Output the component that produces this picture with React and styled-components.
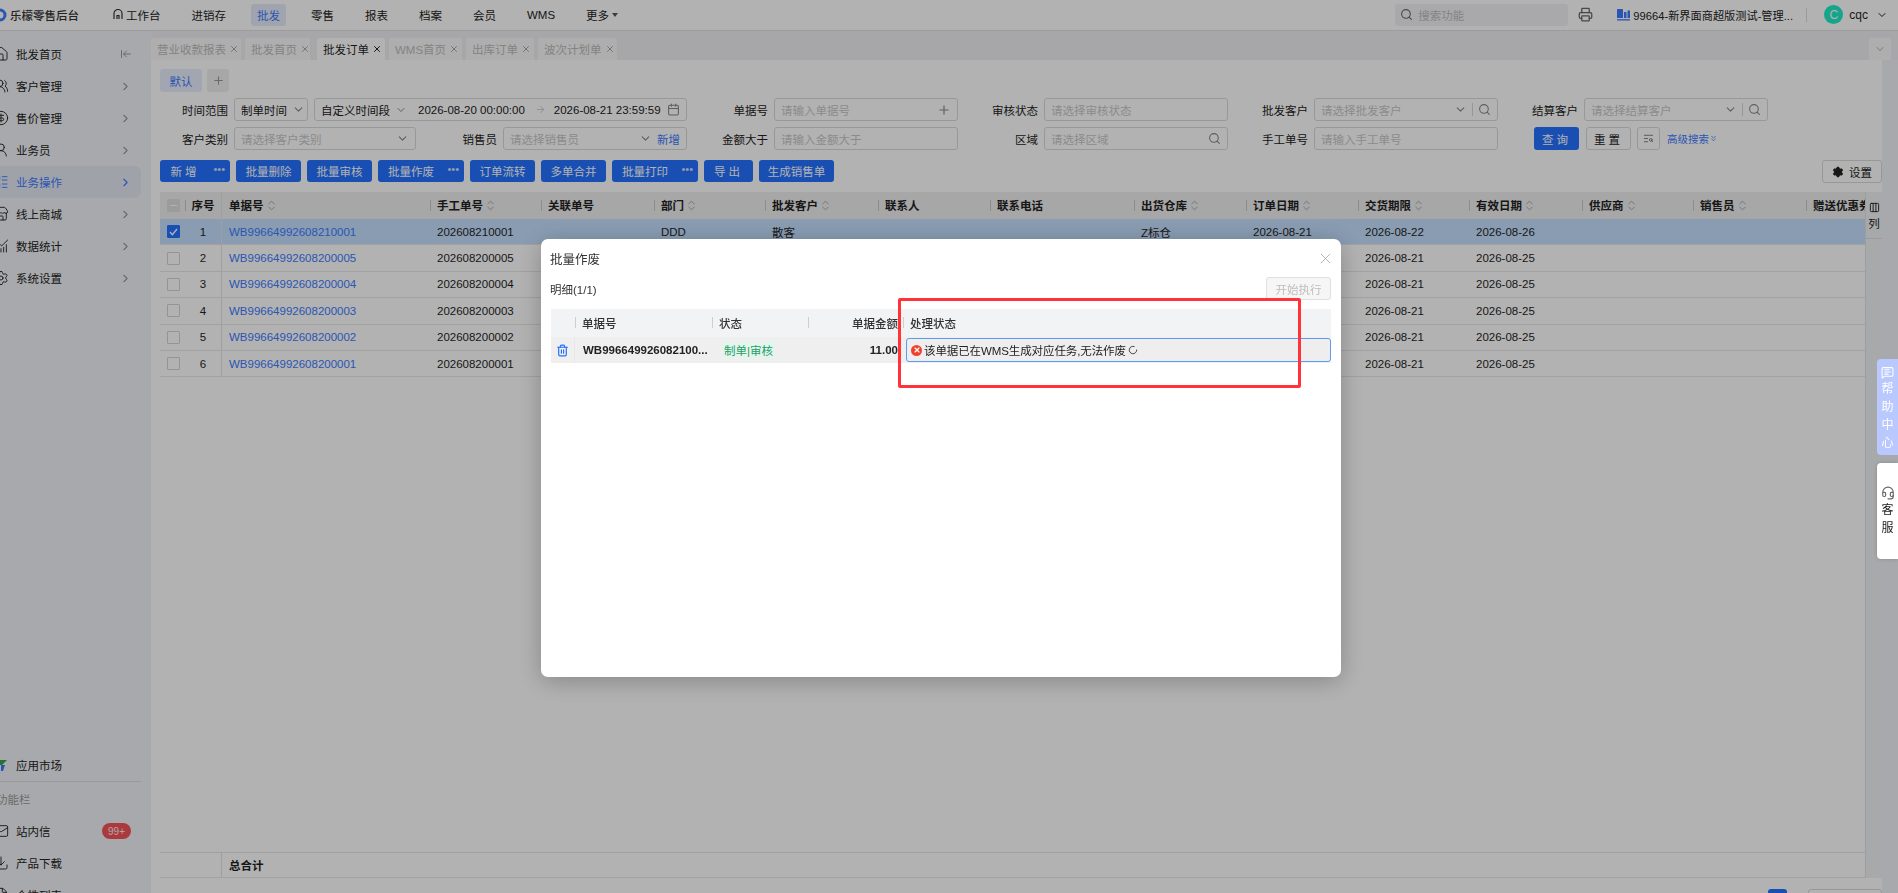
import React from "react";
import styled, { createGlobalStyle } from "styled-components";
import {
  ArrowLeftToLine, ArrowRight, Calendar, ChartNoAxesCombined, ChevronDown, ChevronRight,
  ChevronsDown, ChevronsUpDown, CircleDollarSign, Columns3, Download, FileText, Headset, House,
  LayoutList, LoaderCircle, Mail, MessageSquareText, Plus, Printer, Search, Settings,
  Store, TextSearch, Trash2, UserRound, UsersRound, X,
} from "lucide-react";

const GlobalStyle = createGlobalStyle`
  * { box-sizing: border-box; }
  html, body { margin: 0; height: 100%; overflow: hidden; }
  body {
    font-family: "Liberation Sans", "Noto Sans CJK SC", sans-serif;
    font-size: 11.5px;
    color: #1f1f1f;
    background: #fff;
  }
`;

const Page = styled.div`
  width: 1898px;
  height: 893px;
  display: flex;
  flex-direction: column;
  overflow: hidden;
`;

/* top bar */
const Header = styled.header`
  height: 31px;
  flex: none;
  display: flex;
  align-items: center;
  background: #fff;
  border-bottom: 1px solid #e0e0e0;
  padding-bottom: 1px;
`;

const Logo = styled.div`
  width: 107px;
  display: flex;
  align-items: center;
  gap: 3px;
  font-weight: 500;
  color: #333;
  svg { margin-left: -7px; }
`;

const Nav = styled.nav`
  display: flex;
  align-items: center;
  gap: 19px;
`;

const NavItem = styled.div`
  height: 22px;
  padding: 0 6px;
  display: flex;
  align-items: center;
  gap: 3px;
  border-radius: 3px;
  color: ${(p) => (p.$active ? "#3c7bff" : "#222")};
  background: ${(p) => (p.$active ? "#e6ebfb" : "transparent")};
`;

const HeaderRight = styled.div`
  margin-left: auto;
  display: flex;
  align-items: center;
  padding-right: 10px;
`;

const TopSearch = styled.div`
  width: 173px;
  height: 22px;
  display: flex;
  align-items: center;
  gap: 5px;
  padding-left: 5px;
  border-radius: 3px;
  background: #f2f3f6;
  color: #bdbdbd;
`;

const PrintBtn = styled.span`
  display: flex;
  margin-left: 10px;
  color: #666;
`;

const Company = styled.div`
  display: flex;
  align-items: center;
  gap: 3px;
  margin-left: 24px;
  width: 172px;
  font-size: 11.2px;
  color: #222;
  white-space: nowrap;
  svg { flex: none; }
`;

const VLine = styled.i`
  width: 1px;
  height: 14px;
  margin: 0 17px;
  background: #dcdcdc;
`;

const Avatar = styled.div`
  width: 19px;
  height: 19px;
  border-radius: 50%;
  background: #1eecc8;
  color: #fff;
  font-size: 12px;
  display: flex;
  align-items: center;
  justify-content: center;
`;

const UserName = styled.span`
  margin: 0 8px 0 6px;
  font-size: 12px;
`;

/* left menu */
const Body = styled.div`
  flex: 1;
  min-height: 0;
  display: flex;
`;

const Sidebar = styled.aside`
  width: 151px;
  flex: none;
  background: #f1f3f6;
  display: flex;
  flex-direction: column;
  padding-top: 7px;
  overflow: hidden;
`;

const SideItem = styled.div`
  height: 32px;
  flex: none;
  width: 141px;
  display: flex;
  align-items: center;
  gap: 7px;
  border-radius: 0 6px 6px 0;
  font-size: 11.5px;
  color: ${(p) => (p.$active ? "#3c7bff" : "#222")};
  background: ${(p) => (p.$active ? "#e4e8f3" : "transparent")};
  margin-bottom: ${(p) => p.$mb || 0}px;
  > svg:first-child { margin-left: -7px; flex: none; }
`;

const SideArrow = styled.span`
  margin-left: auto;
  margin-right: 9px;
  display: flex;
  color: ${(p) => (p.$active ? "#3c7bff" : "#9a9a9a")};
`;

const Spacer = styled.div`
  flex: 1;
`;

const SideLine = styled.div`
  height: 1px;
  width: 141px;
  flex: none;
  background: #dcdde0;
`;

const SideCaption = styled.div`
  height: 33px;
  flex: none;
  display: flex;
  align-items: center;
  color: #999;
  margin-left: -4px;
`;

const Badge = styled.span`
  margin-left: auto;
  margin-right: 10px;
  width: 29px;
  height: 16px;
  border-radius: 8px;
  background: #f4545a;
  color: #ffe9e9;
  font-size: 10px;
  display: flex;
  align-items: center;
  justify-content: center;
`;

/* tabs */
const Main = styled.main`
  flex: 1;
  min-width: 0;
  display: flex;
  flex-direction: column;
`;

const TabBar = styled.div`
  height: 29px;
  flex: none;
  display: flex;
  align-items: flex-end;
  gap: 4px;
  background: #eff0f3;
`;

const Tab = styled.div`
  height: 22px;
  width: ${(p) => p.$w}px;
  margin-right: ${(p) => p.$mr || 0}px;
  display: flex;
  align-items: center;
  justify-content: flex-start;
  padding-left: 6px;
  gap: 3px;
  border-radius: 3px 3px 0 0;
  background: ${(p) => (p.$active ? "#fff" : "#f9f9fa")};
  color: ${(p) => (p.$active ? "#1f1f1f" : "#bcbcbc")};
  white-space: nowrap;
  svg { color: ${(p) => (p.$active ? "#222" : "#aaa")}; flex: none; }
`;

const TabMore = styled(Tab)`
  margin-left: auto;
  margin-right: 7px;
  width: 22px;
  padding-left: 5px;
`;

const Content = styled.div`
  flex: 1;
  min-height: 0;
  background: #fff;
  padding: 9px 16px 0 9px;
  display: flex;
  flex-direction: column;
`;

const PlanRow = styled.div`
  display: flex;
  gap: 5px;
  height: 23px;
  flex: none;
`;

const PlanChip = styled.div`
  width: 42px;
  display: flex;
  align-items: center;
  justify-content: center;
  border-radius: 3px;
  background: #e9eefe;
  color: #3c7bff;
`;

const PlanAdd = styled.div`
  width: 22px;
  display: flex;
  align-items: center;
  justify-content: center;
  border-radius: 3px;
  background: #f0f0f0;
  color: #999;
`;

/* filter form */
const FilterGrid = styled.div`
  margin-top: 6px;
  flex: none;
  display: grid;
  grid-template-columns: 527px 271px 270px 270px 270px 1fr;
  grid-auto-rows: 23px;
  row-gap: 6px;
`;

const Field = styled.div`
  display: flex;
  align-items: center;
  justify-content: flex-end;
  gap: 6px;
`;

const WideField = styled.div`
  display: flex;
  align-items: center;
  gap: 6px;
`;

const Label = styled.label`
  width: ${(p) => p.$w || 60}px;
  flex: none;
  text-align: right;
  white-space: nowrap;
  color: #222;
`;

const Input = styled.div`
  width: ${(p) => p.$w || 184}px;
  height: 23px;
  flex: none;
  display: flex;
  align-items: center;
  gap: 5px;
  padding: 0 6px;
  border: 1px solid #dadada;
  border-radius: 3px;
  background: #fff;
  color: ${(p) => (p.$value ? "#222" : "#c8c8c8")};
  white-space: nowrap;
  overflow: hidden;
  svg { flex: none; color: #888; }
`;

const DateFrom = styled.span`
  margin-left: 6px;
`;

const DateArrow = styled.span`
  display: flex;
  margin: 0 3px 0 5px;
  svg { color: #ccc; }
`;

const Push = styled.span`
  margin-left: auto;
  display: flex;
  align-items: center;
  gap: 5px;
`;

const AddLink = styled.span`
  color: #3c7bff;
`;

const IconSep = styled.i`
  width: 1px;
  height: 13px;
  background: #d8d8d8;
`;

const QueryRow = styled.div`
  grid-column: 5 / span 2;
  display: flex;
  align-items: center;
  padding-left: 36px;
`;

const Primary = styled.button`
  height: ${(p) => p.$h || 22}px;
  width: ${(p) => p.$w}px;
  flex: none;
  border: none;
  border-radius: 3px;
  padding: 0;
  background: #2572ff;
  color: #fff;
  font: inherit;
  display: flex;
  align-items: center;
  justify-content: center;
  position: relative;
  letter-spacing: ${(p) => (p.$spaced ? "3px" : "0")};
`;

const Ghost = styled.button`
  height: 23px;
  width: ${(p) => p.$w}px;
  flex: none;
  margin-left: ${(p) => p.$ml || 0}px;
  border: 1px solid #dadada;
  border-radius: 3px;
  padding: 0;
  background: #fff;
  color: #222;
  font: inherit;
  display: flex;
  align-items: center;
  justify-content: center;
  gap: 5px;
  letter-spacing: ${(p) => (p.$spaced ? "3px" : "0")};
`;

const AdvLink = styled.span`
  margin-left: 7px;
  display: flex;
  align-items: center;
  font-size: 10.5px;
  color: #3c7bff;
  white-space: nowrap;
`;

/* action toolbar */
const Toolbar = styled.div`
  margin-top: 10px;
  height: 22px;
  flex: none;
  display: flex;
  gap: 6px;
`;

const BtnLabel = styled.span`
  margin-right: ${(p) => (p.$dots ? "20px" : "0")};
`;

const Dots = styled.span`
  position: absolute;
  right: 5px;
  top: 3px;
  font-size: 11px;
  letter-spacing: 0;
  color: #cfe0ff;
`;

const ToolRight = styled.div`
  margin-left: auto;
`;

/* order table */
const TableArea = styled.div`
  margin-top: 10px;
  height: 686px;
  flex: none;
  display: flex;
`;

const Table = styled.div`
  width: 1705px;
  flex: none;
  display: flex;
  flex-direction: column;
  overflow: hidden;
`;

const Row = styled.div`
  display: grid;
  grid-template-columns: 25px 37px 208px 111px 113px 111px 113px 112px 144px 112px 112px 111px 113px 111px 113px 59px;
  flex: none;
  height: ${(p) => p.$h || 26.4}px;
  background: ${(p) => p.$bg || "#fff"};
  border-bottom: 1px solid ${(p) => p.$line || "#e8e8e8"};
`;

const TotalRow = styled(Row)`
  border-top: 1px solid #e4e4e4;
`;

const Th = styled.div`
  position: relative;
  display: flex;
  align-items: center;
  gap: 1px;
  padding-left: 7px;
  font-weight: 600;
  white-space: nowrap;
  overflow: hidden;
  color: #222;
  svg { color: #999; flex: none; }
  &::before {
    content: "";
    display: ${(p) => (p.$plain ? "none" : "block")};
    position: absolute;
    left: 0;
    top: 8px;
    height: 11px;
    width: 1px;
    background: #c9c9c9;
  }
`;

const Td = styled.div`
  display: flex;
  align-items: center;
  padding-left: 7px;
  white-space: nowrap;
  overflow: hidden;
  font-weight: ${(p) => (p.$bold ? 600 : 400)};
  color: ${(p) => (p.$link ? "#3c7bff" : "#1f1f1f")};
`;

const CheckCell = styled.div`
  display: flex;
  align-items: center;
  padding-left: 7px;
`;

const SeqCell = styled.div`
  display: flex;
  align-items: center;
  justify-content: center;
  font-weight: ${(p) => (p.$head ? 600 : 400)};
  border-right: 1px solid #e4e4e4;
  position: relative;
  &::before {
    content: "";
    display: ${(p) => (p.$head ? "block" : "none")};
    position: absolute;
    left: 0;
    top: 8px;
    height: 11px;
    width: 1px;
    background: #c9c9c9;
  }
`;

const Box = styled.span`
  width: 13px;
  height: 13px;
  border-radius: 1px;
  display: flex;
  align-items: center;
  justify-content: center;
  background: ${(p) => (p.$on ? "#2572ff" : p.$half ? "#dedede" : "#fff")};
  border: 1.5px solid ${(p) => (p.$on ? "#2572ff" : p.$half ? "#dedede" : "#d4d4d4")};
`;

const BoxDash = styled.i`
  width: 7px;
  height: 1px;
  background: #fff;
`;

const TableFill = styled.div`
  flex: 1;
`;

const ColumnBar = styled.div`
  width: 17px;
  flex: none;
  background: #f1f2f4;
  border-left: 1px solid #e2e2e2;
`;

const ColumnHead = styled.div`
  height: 47px;
  padding-top: 10px;
  display: flex;
  flex-direction: column;
  align-items: center;
  gap: 2px;
  border-bottom: 1px solid #dedede;
`;

const Pager = styled.div`
  margin-top: 11px;
  display: flex;
  justify-content: flex-end;
  gap: 21px;
`;

const PagerBlue = styled.div`
  width: 19px;
  height: 20px;
  border-radius: 3px;
  background: #2572ff;
`;

const PagerBox = styled.div`
  width: 74px;
  height: 20px;
  border-radius: 3px;
  border: 1px solid #dadada;
`;

const RightGutter = styled.div`
  position: fixed;
  top: 60px;
  right: 0;
  width: 16px;
  bottom: 0;
  background: #f1f3f6;
`;

/* dim layer and dialog */
const Mask = styled.div`
  position: fixed;
  inset: 0;
  background: rgba(0, 0, 0, 0.3);
  display: flex;
  justify-content: center;
  align-items: flex-start;
  padding: 239px 16px 0 0;
`;

const Dialog = styled.div`
  position: relative;
  width: 800px;
  height: 438px;
  background: #fff;
  border-radius: 7px;
  box-shadow: 0 4px 24px rgba(0, 0, 0, 0.25);
  padding: 0 10px 0 9px;
`;

const DialogHead = styled.div`
  height: 38px;
  display: flex;
  align-items: center;
  justify-content: space-between;
  font-size: 12.5px;
  color: #333;
  svg { color: #999; margin-right: -3px; }
`;

const DetailBar = styled.div`
  height: 23px;
  display: flex;
  align-items: center;
  justify-content: space-between;
  color: #333;
`;

const DisabledBtn = styled.button`
  width: 65px;
  height: 23px;
  padding: 0;
  border: 1px solid #e0e0e0;
  border-radius: 3px;
  background: #f6f6f6;
  color: #bdbdbd;
  font: inherit;
`;

const MiniTable = styled.div`
  margin-top: 9px;
  margin-left: 1px;
`;

const MiniRow = styled.div`
  display: grid;
  grid-template-columns: 24px 137px 96px 95px 1fr;
  height: ${(p) => p.$h}px;
  background: ${(p) => p.$bg};
`;

const MiniTh = styled.div`
  position: relative;
  display: flex;
  align-items: center;
  justify-content: ${(p) => (p.$right ? "flex-end" : "flex-start")};
  padding: 0 ${(p) => (p.$right ? "5px" : "7px")};
  color: #333;
  font-weight: 500;
  white-space: nowrap;
  overflow: hidden;
  &::before {
    content: "";
    display: ${(p) => (p.$noBar ? "none" : "block")};
    position: absolute;
    left: 0;
    top: 8px;
    height: 11px;
    width: 1px;
    background: #cfcfcf;
  }
`;

const MiniTd = styled.div`
  display: flex;
  align-items: center;
  justify-content: ${(p) => (p.$right ? "flex-end" : "flex-start")};
  padding: 0 ${(p) => (p.$right ? "5px" : "8px")};
  color: #222;
  font-weight: ${(p) => (p.$bold ? 600 : 400)};
  white-space: nowrap;
  overflow: hidden;
`;

const TrashCell = styled.div`
  display: flex;
  align-items: center;
  justify-content: center;
  color: #2572ff;
  border-right: 1px solid #e8e8e8;
`;

const StatusTag = styled.span`
  margin-left: 2px;
  padding: 1px 2px;
  color: #22a06b;
  background: #e6f5ec;
`;

const ErrorBox = styled.div`
  margin: 1px 0 1px 3px;
  display: flex;
  align-items: center;
  gap: 2px;
  padding-left: 4px;
  border: 1px solid #5b9bf5;
  border-radius: 3px;
  background: #eeeeee;
  color: #222;
  white-space: nowrap;
  letter-spacing: -0.1px;
  svg { color: #333; }
`;

const ErrorDot = styled.span`
  width: 11px;
  height: 11px;
  border-radius: 50%;
  background: #f0402e;
  display: flex;
  align-items: center;
  justify-content: center;
  flex: none;
  svg { color: #fff; }
`;

const RedMark = styled.div`
  position: absolute;
  left: 357px;
  top: 59px;
  width: 403px;
  height: 90px;
  border: 3.5px solid #ff3338;
  border-radius: 2px;
  pointer-events: none;
`;

/* floating help tabs */
const HelpTab = styled.div`
  position: fixed;
  right: 0;
  top: ${(p) => p.$top}px;
  width: 21px;
  height: 96px;
  border-radius: 4px 0 0 4px;
  background: ${(p) => (p.$white ? "#fff" : "#b9c9ff")};
  color: ${(p) => (p.$white ? "#222" : "#fff")};
  display: flex;
  flex-direction: column;
  align-items: center;
  justify-content: ${(p) => (p.$white ? "center" : "flex-start")};
  padding-top: ${(p) => (p.$white ? "0" : "7px")};
  gap: 3px;
  font-size: 12px;
  line-height: 15px;
  box-shadow: ${(p) => (p.$white ? "0 0 4px rgba(0,0,0,.2)" : "none")};
  svg { color: ${(p) => (p.$white ? "#666" : "#fff")}; }
`;

const tabs = [
  ["营业收款报表", 90], ["批发首页", 65], ["批发订单", 68, true], ["WMS首页", 73], ["出库订单", 68], ["波次计划单", 79],
];

const navItems = ["进销存", "批发", "零售", "报表", "档案", "会员", "WMS"];

const menu = [
  ["批发首页", House], ["客户管理", UsersRound], ["售价管理", CircleDollarSign], ["业务员", UserRound],
  ["业务操作", LayoutList, true], ["线上商城", Store], ["数据统计", ChartNoAxesCombined], ["系统设置", Settings],
];

const heads = [
  ["单据号", 1], ["手工单号", 1], ["关联单号"], ["部门", 1], ["批发客户", 1], ["联系人"], ["联系电话"],
  ["出货仓库", 1], ["订单日期", 1], ["交货期限", 1], ["有效日期", 1], ["供应商", 1], ["销售员", 1], ["赠送优惠券"],
];

const orders = [
  ["WB99664992608210001", "202608210001", "2026-08-21", "2026-08-22", "2026-08-26"],
  ["WB99664992608200005", "202608200005", "2026-08-20", "2026-08-21", "2026-08-25"],
  ["WB99664992608200004", "202608200004", "2026-08-20", "2026-08-21", "2026-08-25"],
  ["WB99664992608200003", "202608200003", "2026-08-20", "2026-08-21", "2026-08-25"],
  ["WB99664992608200002", "202608200002", "2026-08-20", "2026-08-21", "2026-08-25"],
  ["WB99664992608200001", "202608200001", "2026-08-20", "2026-08-21", "2026-08-25"],
];

const Select = ({ w, value, text, search }) => (
  <Input $w={w} $value={value}>
    {text}
    <Push>
      <ChevronDown size={13} />
      {search && <IconSep />}
      {search && <Search size={13} />}
    </Push>
  </Input>
);

const App = () => {
  return (
    <Page>
      <GlobalStyle />
      <Header>
        <Logo>
          <svg width="14" height="14" viewBox="0 0 14 14">
            <circle cx="7" cy="7" r="5" fill="none" stroke="#3c7bff" strokeWidth="3" />
          </svg>
          乐檬零售后台
        </Logo>
        <Nav>
          <NavItem>
            <svg width="10" height="11" viewBox="0 0 10 11" fill="none" stroke="#333" strokeWidth="1.2">
              <path d="M1 10V4.5a4 4 0 0 1 8 0V10M4 10V6.5h2V10" />
            </svg>
            工作台
          </NavItem>
          {navItems.map((n) => (
            <NavItem key={n} $active={n === "批发"}>{n}</NavItem>
          ))}
          <NavItem>更多<svg width="6" height="4" viewBox="0 0 6 4"><path d="M0 0h6L3 4z" fill="#555" /></svg></NavItem>
        </Nav>
        <HeaderRight>
          <TopSearch><Search size={13} color="#666" />搜索功能</TopSearch>
          <PrintBtn><Printer size={15} /></PrintBtn>
          <Company>
            <svg width="13" height="13" viewBox="0 0 13 13" fill="#3c7bff">
              <rect x="0" y="1" width="6" height="9" rx="0.5" />
              <rect x="7" y="4" width="2.5" height="6" />
              <rect x="10.5" y="2.5" width="2.5" height="7.5" />
              <rect x="0" y="11.2" width="13" height="1.3" />
            </svg>
            99664-新界面商超版测试-管理...
          </Company>
          <VLine />
          <Avatar>C</Avatar>
          <UserName>cqc</UserName>
          <ChevronDown size={12} />
        </HeaderRight>
      </Header>

      <Body>
        <Sidebar>
          {menu.map(([name, Icon, active], i) => (
            <SideItem key={name} $active={active}>
              <Icon size={16} strokeWidth={1.4} />
              {name}
              <SideArrow $active={active}>
                {i === 0 ? <ArrowLeftToLine size={12} /> : <ChevronRight size={13} />}
              </SideArrow>
            </SideItem>
          ))}
          <Spacer />
          <SideItem>
            <svg width="16" height="16" viewBox="0 0 16 16">
              <path d="M2 3h6v5H2z" fill="#38a34a" /><path d="M8 3h6L9 8H8z" fill="#38a34a" /><path d="M8 8h4l-2 6H8z" fill="#3c7bff" />
            </svg>
            应用市场
          </SideItem>
          <SideLine />
          <SideCaption>功能栏</SideCaption>
          <SideItem>
            <Mail size={16} strokeWidth={1.4} />站内信<Badge>99+</Badge>
          </SideItem>
          <SideItem>
            <Download size={16} strokeWidth={1.4} />产品下载
          </SideItem>
          <SideItem $mb={-18}>
            <FileText size={16} strokeWidth={1.4} />个性列表
          </SideItem>
        </Sidebar>

        <Main>
          <TabBar>
            {tabs.map(([name, w, active]) => (
              <Tab key={name} $w={w} $active={active} $mr={name === "批发首页" ? 3 : 0}>
                {name}<X size={10} strokeWidth={2.4} />
              </Tab>
            ))}
            <TabMore $w={22}><ChevronDown size={12} /></TabMore>
          </TabBar>

          <Content>
            <PlanRow>
              <PlanChip>默认</PlanChip>
              <PlanAdd><Plus size={13} /></PlanAdd>
            </PlanRow>

            <FilterGrid>
              <WideField>
                <Label $w={68}>时间范围</Label>
                <Select w={74} value text="制单时间" />
                <Input $w={373} $value>
                  自定义时间段
                  <ChevronDown size={12} />
                  <DateFrom>2026-08-20 00:00:00</DateFrom>
                  <DateArrow><ArrowRight size={11} /></DateArrow>
                  2026-08-21 23:59:59
                  <Push><Calendar size={13} /></Push>
                </Input>
              </WideField>
              <Field>
                <Label>单据号</Label>
                <Input>请输入单据号<Push><Plus size={14} /></Push></Input>
              </Field>
              <Field>
                <Label>审核状态</Label>
                <Input>请选择审核状态</Input>
              </Field>
              <Field>
                <Label>批发客户</Label>
                <Select text="请选择批发客户" search />
              </Field>
              <Field>
                <Label>结算客户</Label>
                <Select text="请选择结算客户" search />
              </Field>
              <span />

              <WideField>
                <Label $w={68}>客户类别</Label>
                <Select w={182} text="请选择客户类别" />
                <Label $w={75}>销售员</Label>
                <Input $w={184}>
                  请选择销售员
                  <Push><ChevronDown size={13} /><AddLink>新增</AddLink></Push>
                </Input>
              </WideField>
              <Field>
                <Label>金额大于</Label>
                <Input>请输入金额大于</Input>
              </Field>
              <Field>
                <Label>区域</Label>
                <Input>请选择区域<Push><Search size={13} /></Push></Input>
              </Field>
              <Field>
                <Label>手工单号</Label>
                <Input>请输入手工单号</Input>
              </Field>
              <QueryRow>
                <Primary $w={45} $h={23} $spaced>查询</Primary>
                <Ghost $w={45} $ml={7} $spaced>重置</Ghost>
                <Ghost $w={23} $ml={6}><TextSearch size={11} color="#777" /></Ghost>
                <AdvLink>高级搜索<ChevronsDown size={9} /></AdvLink>
              </QueryRow>
            </FilterGrid>

            <Toolbar>
              <Primary $w={70} $spaced><BtnLabel $dots>新增</BtnLabel><Dots>•••</Dots></Primary>
              <Primary $w={65}>批量删除</Primary>
              <Primary $w={65}>批量审核</Primary>
              <Primary $w={86}><BtnLabel $dots>批量作废</BtnLabel><Dots>•••</Dots></Primary>
              <Primary $w={65}>订单流转</Primary>
              <Primary $w={65}>多单合并</Primary>
              <Primary $w={86}><BtnLabel $dots>批量打印</BtnLabel><Dots>•••</Dots></Primary>
              <Primary $w={49} $spaced>导出</Primary>
              <Primary $w={75}>生成销售单</Primary>
              <ToolRight>
                <Ghost $w={60}><Settings size={12} fill="#222" />设置</Ghost>
              </ToolRight>
            </Toolbar>

            <TableArea>
              <Table>
                <Row $h={27} $bg="#efefef" $line="#efefef">
                  <CheckCell><Box $half><BoxDash /></Box></CheckCell>
                  <SeqCell $head>序号</SeqCell>
                  {heads.map(([name, sort], i) => (
                    <Th key={name} $plain={i === 0}>
                      {name}{sort && <ChevronsUpDown size={13} strokeWidth={1.5} />}
                    </Th>
                  ))}
                </Row>
                {orders.map((o, i) => (
                  <Row key={o[0]} $bg={i === 0 ? "#c5e0ff" : "#fff"}>
                    <CheckCell>
                      <Box $on={i === 0}>
                        {i === 0 && (
                          <svg width="9" height="8" viewBox="0 0 9 8" fill="none" stroke="#fff" strokeWidth="1.4">
                            <path d="M1 4l2.4 2.6L8 1" />
                          </svg>
                        )}
                      </Box>
                    </CheckCell>
                    <SeqCell>{i + 1}</SeqCell>
                    <Td $link>{o[0]}</Td>
                    <Td>{o[1]}</Td>
                    <Td />
                    <Td>DDD</Td>
                    <Td>散客</Td>
                    <Td />
                    <Td />
                    <Td>Z标仓</Td>
                    <Td>{o[2]}</Td>
                    <Td>{o[3]}</Td>
                    <Td>{o[4]}</Td>
                    <Td /><Td /><Td />
                  </Row>
                ))}
                <TableFill />
                <TotalRow $h={26}>
                  <CheckCell />
                  <SeqCell />
                  <Td $bold>总合计</Td>
                </TotalRow>
              </Table>
              <ColumnBar>
                <ColumnHead>
                  <Columns3 size={11} />
                  <span>列</span>
                </ColumnHead>
              </ColumnBar>
            </TableArea>

            <Pager>
              <PagerBlue />
              <PagerBox />
            </Pager>
          </Content>
        </Main>
      </Body>

      <RightGutter />

      <Mask>
        <Dialog>
          <DialogHead>批量作废<X size={17} strokeWidth={1} /></DialogHead>
          <DetailBar>
            明细(1/1)
            <DisabledBtn>开始执行</DisabledBtn>
          </DetailBar>
          <MiniTable>
            <MiniRow $h={28} $bg="#f2f3f5">
              <MiniTh $noBar />
              <MiniTh>单据号</MiniTh>
              <MiniTh>状态</MiniTh>
              <MiniTh $right>单据金额</MiniTh>
              <MiniTh>处理状态</MiniTh>
            </MiniRow>
            <MiniRow $h={26} $bg="#efefef">
              <TrashCell><Trash2 size={13} strokeWidth={2.2} /></TrashCell>
              <MiniTd $bold>WB996649926082100...</MiniTd>
              <MiniTd><StatusTag>制单|审核</StatusTag></MiniTd>
              <MiniTd $right $bold>11.00</MiniTd>
              <ErrorBox>
                <ErrorDot><X size={8} strokeWidth={3.5} /></ErrorDot>
                该单据已在WMS生成对应任务,无法作废
                <LoaderCircle size={10} strokeWidth={2.2} />
              </ErrorBox>
            </MiniRow>
          </MiniTable>
          <RedMark />
        </Dialog>
      </Mask>

      <HelpTab $top={359}>
        <MessageSquareText size={13} />
        <span>帮</span><span>助</span><span>中</span><span>心</span>
      </HelpTab>
      <HelpTab $top={463} $white>
        <Headset size={14} />
        <span>客</span><span>服</span>
      </HelpTab>
    </Page>
  );
};

export default App;
